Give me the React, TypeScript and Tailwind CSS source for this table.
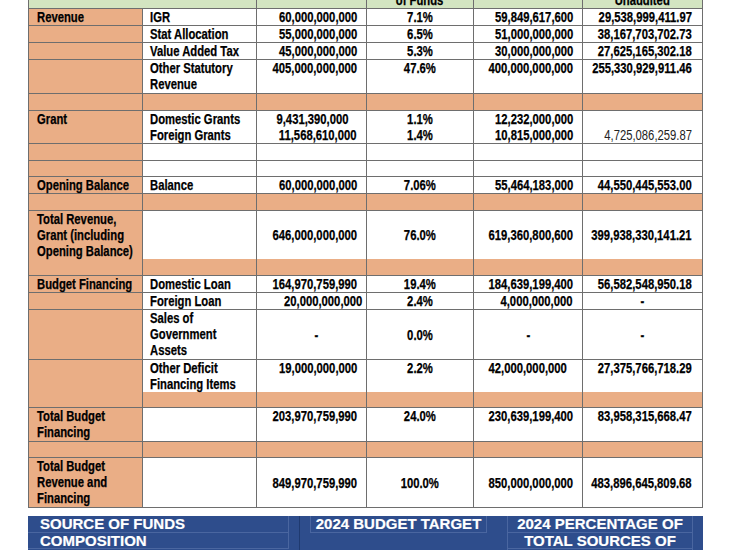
import clsx from "clsx";

type Row = {
  h: string;
  kind?: "spacer" | "blank";
  cells?: string[];
  mid?: boolean;
  extra?: Record<number, string>;
};

// cells that sit in the middle of their column instead of against the right edge
const centre = "!justify-center !pr-0";

const rows: Row[] = [
  { h: "h-[17px]", cells: ["Revenue", "IGR", "60,000,000,000", "7.1%", "59,849,617,600", "29,538,999,411.97"] },
  { h: "h-[17px]", cells: ["", "Stat Allocation", "55,000,000,000", "6.5%", "51,000,000,000", "38,167,703,702.73"] },
  { h: "h-[17px]", cells: ["", "Value Added Tax", "45,000,000,000", "5.3%", "30,000,000,000", "27,625,165,302.18"] },
  { h: "h-[34px]", cells: ["", "Other Statutory\nRevenue", "405,000,000,000", "47.6%", "400,000,000,000", "255,330,929,911.46"] },
  { h: "h-[17px]", kind: "spacer" },
  {
    h: "h-[16px]",
    cells: ["Grant", "Domestic Grants", "9,431,390,000", "1.1%", "12,232,000,000", ""],
    extra: { 2: "!pr-[17px]" },
  },
  {
    h: "h-[17px]",
    cells: ["", "Foreign Grants", "11,568,610,000", "1.4%", "10,815,000,000", "4,725,086,259.87"],
    extra: { 5: "font-normal text-[#222] [-webkit-text-stroke:0px]" },
  },
  { h: "h-[17px]", kind: "blank" },
  { h: "h-[16px]", kind: "blank" },
  { h: "h-[17px]", cells: ["Opening Balance", "Balance", "60,000,000,000", "7.06%", "55,464,183,000", "44,550,445,553.00"] },
  { h: "h-[17px]", kind: "spacer" },
  {
    h: "h-[48px]",
    mid: true,
    cells: ["Total Revenue,\nGrant (including\nOpening Balance)", "", "646,000,000,000", "76.0%", "619,360,800,600", "399,938,330,141.21"],
  },
  { h: "h-[17px]", kind: "spacer" },
  { h: "h-[17px]", cells: ["Budget Financing", "Domestic Loan", "164,970,759,990", "19.4%", "184,639,199,400", "56,582,548,950.18"] },
  {
    h: "h-[17px]",
    cells: ["", "Foreign Loan", "20,000,000,000", "2.4%", "4,000,000,000", "-"],
    extra: { 2: "!pr-[4px]", 5: centre },
  },
  {
    h: "h-[50px]",
    mid: true,
    cells: ["", "Sales of\nGovernment\nAssets", "-", "0.0%", "-", "-"],
    extra: { 2: "!justify-center !pr-0 pl-[10px]", 4: centre, 5: centre },
  },
  {
    h: "h-[32px]",
    cells: ["", "Other Deficit\nFinancing Items", "19,000,000,000", "2.2%", "42,000,000,000", "27,375,766,718.29"],
    extra: { 4: centre },
  },
  { h: "h-[16px]", kind: "spacer" },
  { h: "h-[34px]", cells: ["Total Budget\nFinancing", "", "203,970,759,990", "24.0%", "230,639,199,400", "83,958,315,668.47"] },
  { h: "h-[16px]", kind: "spacer" },
  {
    h: "h-[50px]",
    mid: true,
    cells: ["Total Budget\nRevenue and\nFinancing", "", "849,970,759,990", "100.0%", "850,000,000,000", "483,896,645,809.68"],
  },
];

const colCls = [
  "bg-[#eaae86] pl-[8px] justify-start border-l",
  "bg-white pl-[7px] justify-start",
  "bg-white justify-end pr-[9px]",
  "bg-white justify-center",
  "bg-white justify-end pr-[9px]",
  "bg-white justify-end pr-[10px]",
];

function TableRow({ row }: { row: Row }) {
  return (
    <div className={clsx("grid grid-cols-[115px_114px_110px_107px_109px_120px]", row.h)}>
      {colCls.map((cls, i) => {
        const text = row.cells ? row.cells[i] : "";
        const orange = row.kind === "spacer" || i === 0;
        const extra = row.extra?.[i] ?? "";
        const origin = extra.includes("justify-center") || i === 3
          ? "origin-center"
          : i < 2
            ? "origin-left"
            : "origin-right";
        return (
          <div
            key={i}
            className={clsx(
              "flex border-r border-b border-[#6e6e6e]",
              cls,
              orange && "!bg-[#eaae86]",
              row.mid && i > 1 ? "items-center" : "items-start",
              extra
            )}
          >
            {text && (
              <span className={clsx("inline-block whitespace-pre scale-x-[0.805]", origin)}>{text}</span>
            )}
          </div>
        );
      })}
    </div>
  );
}

export default function App() {
  return (
    <div className="w-[740px] h-[550px] overflow-hidden bg-white pl-[28px] font-['Liberation_Sans',Arial,sans-serif] text-[14px] font-bold leading-[16px] text-black [-webkit-text-stroke:0.25px_#000]">
      <div className="w-[675px]">
        {/* header row, mostly cut off at the top */}
        <div className="-mt-[8px] grid h-[17px] grid-cols-[229px_110px_107px_109px_120px] bg-[#d3e5c1]">
          <div className="border-l border-r border-b border-[#6e6e6e]" />
          <div className="border-r border-b border-[#6e6e6e]" />
          <div className="flex justify-center border-r border-b border-[#6e6e6e]">
            <span className="inline-block scale-x-[0.805]">of Funds</span>
          </div>
          <div className="border-r border-b border-[#6e6e6e]" />
          <div className="flex justify-center border-r border-b border-[#6e6e6e]">
            <span className="inline-block scale-x-[0.805]">Unaudited</span>
          </div>
        </div>

        {rows.map((row, i) => (
          <TableRow key={i} row={row} />
        ))}

        {/* next table header */}
        <div className="mt-[8px] flex h-[50px] bg-[#2e4d8c] text-[15px] leading-[16px] text-white [-webkit-text-stroke:0.2px_#fff]">
          <div className="w-[272px] border-r border-[#1f3a70] pr-[10px]">
            <div className="h-[17px] border-r border-b border-[#4a66a0] pl-[12px]">SOURCE OF FUNDS</div>
            <div className="h-[16px] border-r border-b border-[#4a66a0] pl-[12px]">COMPOSITION</div>
          </div>
          <div className="w-[197px] px-[10px]">
            <div className="h-[17px] border-x border-b border-[#4a66a0] text-center">2024 BUDGET TARGET</div>
          </div>
          <div className="w-[206px] px-[10px] text-center">
            <div className="h-[17px] border-x border-b border-[#4a66a0]">2024 PERCENTAGE OF</div>
            <div className="h-[16px] border-x border-b border-[#4a66a0]">TOTAL SOURCES OF</div>
            <div className="h-[16px] border-x border-[#4a66a0]">FUNDS</div>
          </div>
        </div>
      </div>
    </div>
  );
}
